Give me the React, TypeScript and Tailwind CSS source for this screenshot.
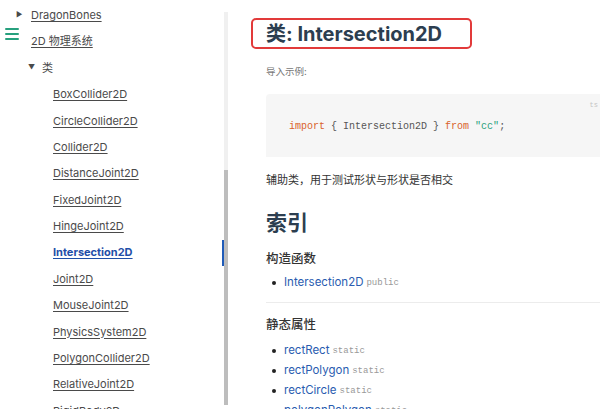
import React from "react"

const sans = "font-['Inter','Noto_Sans_CJK_SC',sans-serif]"
const mono = "font-['Liberation_Mono','DejaVu_Sans_Mono',monospace]"

const classes = [
  "BoxCollider2D",
  "CircleCollider2D",
  "Collider2D",
  "DistanceJoint2D",
  "FixedJoint2D",
  "HingeJoint2D",
  "Intersection2D",
  "Joint2D",
  "MouseJoint2D",
  "PhysicsSystem2D",
  "PolygonCollider2D",
  "RelativeJoint2D",
  "RigidBody2D",
]

const statics = [
  ["rectRect", "static"],
  ["rectPolygon", "static"],
  ["rectCircle", "static"],
  ["polygonPolygon", "static"],
]

const NavRow = ({ children, pl, active = false }) => (
  <div
    className={`h-[26.4px] shrink-0 flex items-center pr-2 ${pl} ${
      active ? "border-r-2 border-[#1f5bb8]" : ""
    }`}
  >
    {children}
  </div>
)

const Sidebar = () => (
  <aside className="relative w-[228px] shrink-0 flex h-full">
    <nav className="w-[224px] pt-[2px] flex flex-col overflow-hidden text-[11px] text-[#4a4a4a]">
      <NavRow pl="pl-[16px]">
        <span className="text-[7px] w-[15px]">▶</span>
        <span className="underline underline-offset-2">DragonBones</span>
      </NavRow>
      <NavRow pl="pl-[31px]">
        <span className="underline underline-offset-2">2D 物理系统</span>
      </NavRow>
      <NavRow pl="pl-[28px]">
        <span className="text-[7px] w-[14px]">▼</span>
        <span>类</span>
      </NavRow>
      {classes.map(name => (
        <NavRow key={name} pl="pl-[53px]" active={name === "Intersection2D"}>
          {name === "Intersection2D" ? (
            <span className="underline underline-offset-2 font-bold text-[#1f4fa8]">{name}</span>
          ) : (
            <span className="underline underline-offset-2">{name}</span>
          )}
        </NavRow>
      ))}
    </nav>
    <div className="w-[4px] flex flex-col pt-[12px] pb-[4px]">
      <div className="h-[158px] bg-[#f0f0f0]" />
      <div className="flex-1 bg-[#bdbdbd]" />
    </div>
    <button className="absolute left-[5px] top-[28px] w-[14px] flex flex-col gap-[3px]">
      <span className="h-[2px] bg-[#27a07e] rounded" />
      <span className="h-[2px] bg-[#27a07e] rounded" />
      <span className="h-[2px] bg-[#27a07e] rounded" />
    </button>
  </aside>
)

const Bullet = ({ name, tag }) => (
  <li className="flex items-center h-[20px]">
    <span className="w-[4px] h-[4px] rounded-full bg-[#222] ml-[6px] mr-[8px]" />
    <span className="text-[11.5px] text-[#2a5cb0]">{name}</span>
    <span className={`${mono} text-[9px] text-[#999] ml-[3px] mt-[2px]`}>{tag}</span>
  </li>
)

const Content = () => (
  <main className="flex-1 pl-[38px] overflow-hidden text-[#2c3e50]">
    <div className="mt-[18px] -ml-[15px] w-[221px] h-[31px] border-2 border-[#e23a3a] rounded-[5px] pl-[13px] flex items-center">
      <h1 className="text-[20px] font-bold leading-none">类: Intersection2D</h1>
    </div>
    <p className="mt-[16px] text-[9.5px] leading-[14px] text-[#777]">导入示例:</p>
    <div className="relative mt-[15px] h-[63px] bg-[#f6f6f6] rounded-tl-[4px] pl-[23px] pt-[2px] flex items-center">
      <code className={`${mono} text-[10px] text-[#555]`}>
        <span className="text-[#d9622b]">import</span> {"{ Intersection2D }"}{" "}
        <span className="text-[#d9622b]">from</span>{" "}
        <span className="text-[#2aa07c]">"cc"</span>;
      </code>
      <span className={`${mono} absolute right-[2px] top-[6px] text-[7px] text-[#c4c4c4]`}>ts</span>
    </div>
    <p className="mt-[16px] text-[11px] leading-[14px] text-[#333]">辅助类，用于测试形状与形状是否相交</p>
    <h2 className="mt-[22px] text-[21px] font-bold leading-[28px]">索引</h2>
    <h3 className="mt-[13px] text-[12.5px] font-medium leading-[18px] text-[#333]">构造函数</h3>
    <ul className="mt-[5px]">
      <Bullet name="Intersection2D" tag="public" />
    </ul>
    <hr className="mt-[9px] border-t border-[#ececec]" />
    <h3 className="mt-[13px] text-[12.5px] font-medium leading-[18px] text-[#333]">静态属性</h3>
    <ul className="mt-[7px]">
      {statics.map(([name, tag]) => (
        <Bullet key={name} name={name} tag={tag} />
      ))}
    </ul>
  </main>
)

export default function App() {
  return (
    <div className={`${sans} w-[600px] h-[409px] flex bg-white overflow-hidden`}>
      <Sidebar />
      <Content />
    </div>
  )
}
